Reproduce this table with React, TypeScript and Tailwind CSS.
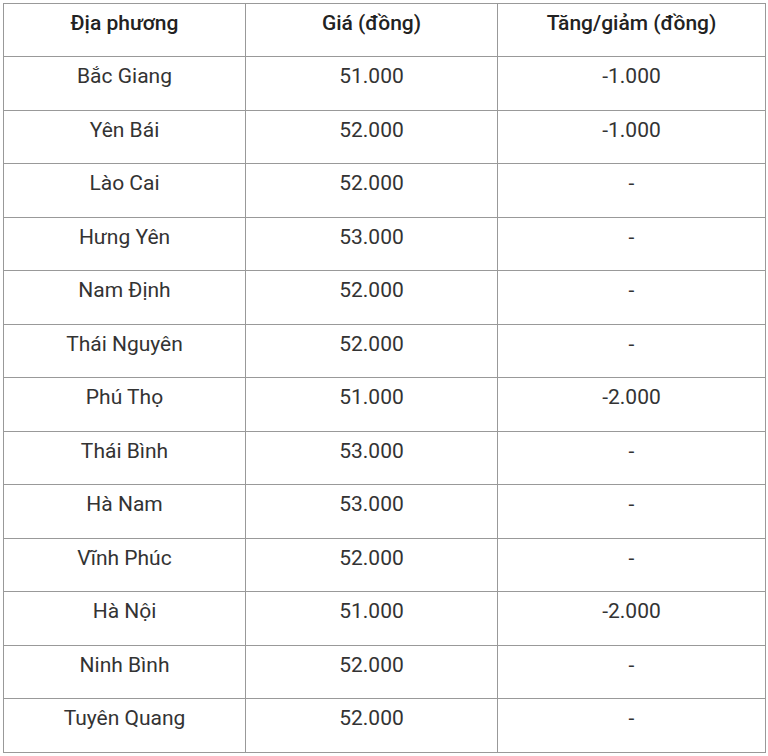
import React from "react";

const rows: [string, string, string][] = [
  ["Bắc Giang", "51.000", "-1.000"],
  ["Yên Bái", "52.000", "-1.000"],
  ["Lào Cai", "52.000", "-"],
  ["Hưng Yên", "53.000", "-"],
  ["Nam Định", "52.000", "-"],
  ["Thái Nguyên", "52.000", "-"],
  ["Phú Thọ", "51.000", "-2.000"],
  ["Thái Bình", "53.000", "-"],
  ["Hà Nam", "53.000", "-"],
  ["Vĩnh Phúc", "52.000", "-"],
  ["Hà Nội", "51.000", "-2.000"],
  ["Ninh Bình", "52.000", "-"],
  ["Tuyên Quang", "52.000", "-"],
];

export default function App() {
  return (
    <div className="bg-white w-[768px] h-[756px] pt-[3px] pl-[3px] font-['Roboto',sans-serif] text-[#333]">
      <table className="border-collapse w-[762px] table-fixed">
        <colgroup>
          <col className="w-[242px]" />
          <col className="w-[252px]" />
          <col className="w-[268px]" />
        </colgroup>
        <thead>
          <tr className="h-[53px]">
            {["Địa phương", "Giá (đồng)", "Tăng/giảm (đồng)"].map((h) => (
              <th key={h} className="border border-[#999] align-top pt-[5px] text-center text-[21px] font-medium leading-[28px] text-[#222]">
                {h}
              </th>
            ))}
          </tr>
        </thead>
        <tbody>
          {rows.map((r, i) => (
            <tr key={i} className="h-[53.5px]">
              {r.map((c, j) => (
                <td key={j} className="border border-[#999] align-top pt-[5px] text-center text-[21px] font-normal leading-[28px]">
                  {c}
                </td>
              ))}
            </tr>
          ))}
        </tbody>
      </table>
    </div>
  );
}
